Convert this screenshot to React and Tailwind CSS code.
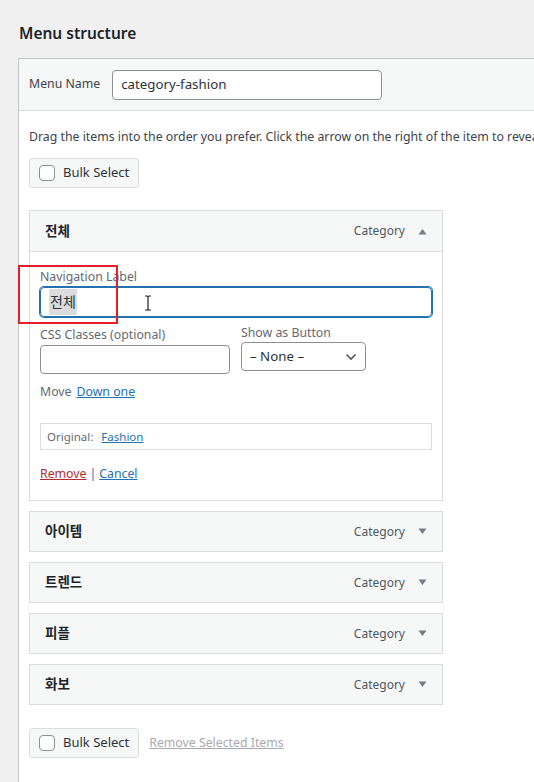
import React from "react";

const items = ["아이템", "트렌드", "피플", "화보"];

const Checkbox = () => (
  <span className="inline-block w-[16px] h-[16px] rounded-[4px] border border-[#8c8f94] bg-white" />
);

const BulkSelect = () => (
  <div className="flex items-center gap-[8px] h-[30px] px-[9px] border border-[#dcdcde] rounded-[3px] bg-[#f6f7f7] text-[#2c3338]">
    <Checkbox />
    <span className="text-[13px]">Bulk Select</span>
  </div>
);

const Arrow = ({ up }) => (
  <svg width="9" height="7" viewBox="0 0 9 7" className="text-[#787c82]">
    {up ? (
      <path d="M0.5 6.5 L4.5 1 L8.5 6.5 Z" fill="currentColor" />
    ) : (
      <path d="M0.5 0.5 L8.5 0.5 L4.5 6 Z" fill="currentColor" />
    )}
  </svg>
);

const ItemHeader = ({ title, up, h = "h-[40px]" }) => (
  <div className={`flex items-center ${h} pl-[15px] pr-[15px] bg-[#f6f7f7]`}>
    <span className="font-bold text-[13.5px] text-[#1d2327]">{title}</span>
    <span className="ml-auto text-[12px] text-[#50575e]">Category</span>
    <span className="ml-[13px] flex items-center">
      <Arrow up={up} />
    </span>
  </div>
);

export default function App() {
  return (
    <div
      className="w-[534px] h-[782px] overflow-hidden bg-[#f0f0f1] text-[12.3px] text-[#3c434a]"
      style={{ fontFamily: '"Noto Sans", "Noto Sans CJK KR", sans-serif' }}
    >
      <h2 className="pl-[19px] pt-[21px] text-[15.5px] leading-[24px] font-semibold text-[#1d2327]">
        Menu structure
      </h2>

      <div className="ml-[18px] mt-[13px] w-[620px] h-[800px] border border-[#c3c4c7] bg-white">
        {/* menu name bar */}
        <div className="flex items-center h-[52px] px-[10px] bg-[#f6f7f7] border-b border-[#dcdcde]">
          <span className="mr-[12px]">Menu Name</span>
          <div className="w-[270px] h-[30px] flex items-center px-[8px] border border-[#8c8f94] rounded-[4px] bg-white text-[13.3px] text-[#2c3338]">
            category-fashion
          </div>
        </div>

        <div className="px-[10px]">
          <p className="mt-[16px] leading-[20px] whitespace-nowrap">
            Drag the items into the order you prefer. Click the arrow on the right of the item to reveal additional configuration options.
          </p>

          <div className="mt-[11px] flex">
            <BulkSelect />
          </div>

          {/* expanded item */}
          <div className="relative mt-[22px] w-[414px] border border-[#dcdcde]">
            <div className="border-b border-[#dcdcde]">
              <ItemHeader title="전체" up />
            </div>
            <div className="px-[10px] pt-[16px] pb-[16px] bg-white">
              <div className="text-[#646970] leading-[18px]">Navigation Label</div>
              <div className="mt-[1px] h-[30px] flex items-center pl-[8px] border border-[#2271b1] rounded-[4px] shadow-[0_0_0_1px_#2271b1] text-[14px] text-[#2c3338]">
                <span className="bg-[#dcdcde] px-[1px] leading-[26px]">전체</span>
              </div>

              <div className="mt-[7px] flex gap-[11px]">
                <div className="w-[190px]">
                  <div className="text-[#646970] leading-[18px] mt-[2px]">CSS Classes (optional)</div>
                  <div className="mt-[1px] h-[29px] border border-[#8c8f94] rounded-[4px] bg-white" />
                </div>
                <div>
                  <div className="text-[#646970] leading-[18px]">Show as Button</div>
                  <div className="w-[125px] h-[29px] flex items-center pl-[8px] pr-[8px] border border-[#8c8f94] rounded-[4px] bg-white text-[13.3px] text-[#2c3338]">
                    <span>– None –</span>
                    <svg className="ml-auto" width="12" height="8" viewBox="0 0 12 8">
                      <path d="M1.5 1.5 L6 6 L10.5 1.5" fill="none" stroke="#50575e" strokeWidth="1.6" />
                    </svg>
                  </div>
                </div>
              </div>

              <div className="mt-[8px] flex gap-[5px] leading-[20px]">
                <span className="text-[#646970]">Move</span>
                <span className="text-[#2271b1] underline">Down one</span>
              </div>

              <div className="mt-[21px] h-[27px] flex items-center px-[6px] border border-[#dcdcde] text-[11.5px]">
                <span className="text-[#646970]">Original:</span>
                <span className="ml-[8px] text-[#2271b1] underline">Fashion</span>
              </div>

              <div className="mt-[14px] leading-[20px]">
                <span className="text-[#b32d2e] underline">Remove</span>
                <span className="text-[#2271b1] mx-[3px]">|</span>
                <span className="text-[#2271b1] underline">Cancel</span>
              </div>
            </div>

            {/* red highlight box */}
            <div className="absolute left-[-12px] top-[54px] w-[100px] h-[59px] border-2 border-[#e3202a]" />
            {/* text cursor */}
            <svg className="absolute left-[114px] top-[84px]" width="8" height="16" viewBox="0 0 8 16">
              <path d="M1 1 H3 Q4 1 4 2 V14 Q4 15 3 15 H1 M7 1 H5 Q4 1 4 2 M4 14 Q4 15 5 15 H7" fill="none" stroke="#1d2327" strokeWidth="1.2" />
            </svg>
          </div>

          {items.map((t) => (
            <div key={t} className="mt-[10px] w-[414px] border border-[#dcdcde]">
              <ItemHeader title={t} h="h-[39px]" />
            </div>
          ))}

          <div className="mt-[23px] flex items-center">
            <BulkSelect />
            <span className="ml-[10px] text-[#a7aaad] underline">Remove Selected Items</span>
          </div>
        </div>
      </div>
    </div>
  );
}
